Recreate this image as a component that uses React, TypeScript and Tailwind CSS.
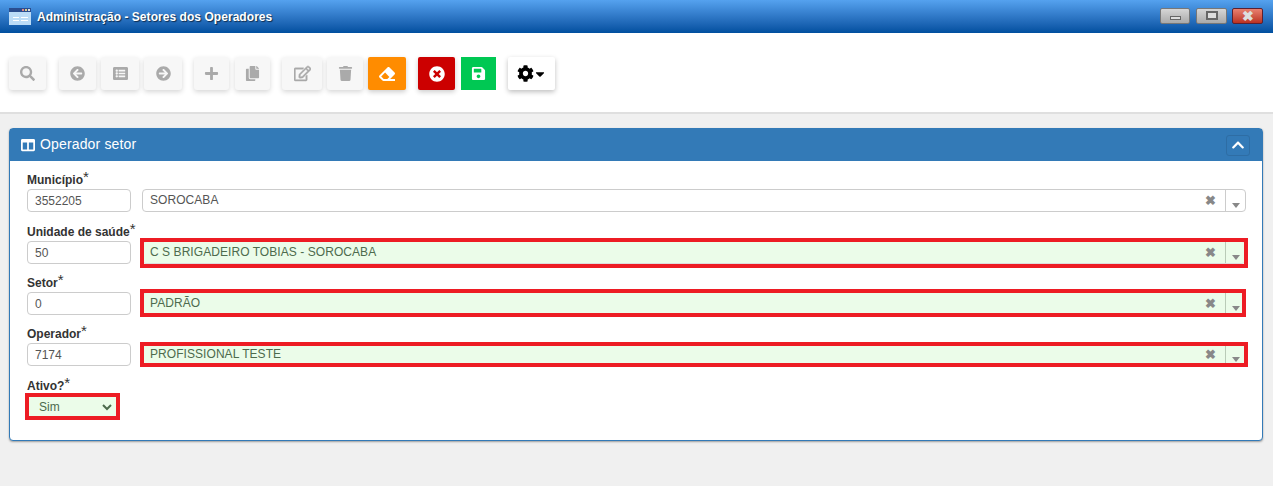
import React from 'react';
import {
  FaSearch, FaArrowCircleLeft, FaArrowCircleRight, FaListAlt, FaPlus, FaCopy, FaRegEdit,
  FaTrash, FaEraser, FaTimesCircle, FaSave, FaCog, FaCaretDown, FaColumns, FaChevronUp,
} from 'react-icons/fa';

const off = 'h-[33px] rounded-[3px] bg-[#f7f7f7] text-[#aaaaaa] shadow-[0_2px_5px_rgba(0,0,0,0.16)] flex items-center justify-center text-[15px]';

function ToolButton({ w, ml, children }: { w: string; ml: string; children: React.ReactNode }) {
  return <div className={`${off} ${w} ${ml}`}>{children}</div>;
}

function Label({ text }: { text: string }) {
  return (
    <div className="h-[19px] pt-[2px] flex items-start text-[12px] leading-[19px] font-bold text-[#333333]">
      {text}
      <span className="text-[15px] font-normal leading-[11px]">*</span>
    </div>
  );
}

function Combo({ code, value, mark, highlight }: { code: string; value: string; mark?: boolean; highlight?: string }) {
  return (
    <div className="flex h-[23px] mt-[1px]">
      <div className="w-[104px] h-[23px] border border-[#cccccc] rounded-[4px] bg-white px-[7px] text-[12px] leading-[23px] text-[#555555]">{code}</div>
      <div className={`relative ml-[11px] w-[1104px] h-[23px] flex border rounded-[4px] text-[12px] ${mark ? 'bg-[#ebfce9] border-[#dddddd] text-[#4d6b4d]' : 'bg-white border-[#cccccc] text-[#555555]'}`}>
        <div className="flex-1 pl-[7px] leading-[20px] tracking-[0.06px]">{value}</div>
        <div className="w-[20px] flex items-center justify-center text-[#888888] text-[13px] font-bold leading-none pr-[9px]">✖</div>
        <div className={`w-[20px] border-l flex items-end justify-center pb-[3px] ${mark ? 'border-[#b9cbb7]' : 'border-[#cccccc]'}`}>
          <div className="w-0 h-0 border-l-[4px] border-r-[4px] border-t-[5px] border-l-transparent border-r-transparent border-t-[#888888]" />
        </div>
        {highlight && <div className={`absolute border-4 border-[#ed1c24] ${highlight}`} />}
      </div>
    </div>
  );
}

export default function App() {
  return (
    <div className="w-[1273px] h-[486px] overflow-hidden bg-[#f0f0f0] font-['Liberation_Sans',Arial,sans-serif]">
      <div className="h-[33px] flex items-center bg-gradient-to-b from-[#55a2ef] to-[#004f9f]">
        <svg width="22" height="17" viewBox="0 0 22 17" className="ml-[9px]">
          <rect x="0" y="0" width="22" height="4" fill="#2a4d8f" />
          <rect x="13" y="1" width="2" height="2" fill="#d88" />
          <rect x="16" y="1" width="2" height="2" fill="#dc8" />
          <rect x="19" y="1" width="2" height="2" fill="#ddd" />
          <rect x="0" y="4" width="22" height="13" fill="#bcdcf7" />
          <rect x="4" y="9" width="6" height="1" fill="#fff" />
          <rect x="4" y="12" width="6" height="1" fill="#fff" />
          <rect x="12" y="9" width="7" height="1" fill="#fff" />
          <rect x="12" y="12" width="7" height="1" fill="#fff" />
        </svg>
        <span className="ml-[6px] text-white text-[12px] font-bold tracking-[0.05px] [text-shadow:1px_1px_1px_rgba(0,0,0,0.6)]">Administração - Setores dos Operadores</span>
        <div className="ml-auto flex items-center mr-[10px] -mt-[2px]">
          <div className="w-[30px] h-[16px] rounded-[2px] border border-[#777777] bg-gradient-to-b from-[#d6d6d6] to-[#aaaaaa] flex items-end justify-center pb-[3px]">
            <div className="w-[11px] h-[4px] border border-[#666666] bg-[#dddddd]" />
          </div>
          <div className="ml-[6px] w-[31px] h-[16px] rounded-[2px] border border-[#777777] bg-gradient-to-b from-[#d6d6d6] to-[#aaaaaa] flex items-center justify-center">
            <div className="w-[12px] h-[9px] border-2 border-[#666666] bg-[#dddddd]" />
          </div>
          <div className="ml-[5px] w-[31px] h-[16px] rounded-[2px] border border-[#5c2030] bg-gradient-to-b from-[#e88070] to-[#bb3020] flex items-center justify-center text-[#dddddd] text-[14px] font-bold leading-none">✖</div>
        </div>
      </div>

      <div className="h-[81px] bg-white border-b-2 border-[#dfdfdf] flex items-start pt-[24px] pl-[9px]">
        <ToolButton w="w-[37px]" ml=""><FaSearch /></ToolButton>
        <ToolButton w="w-[37px]" ml="ml-[13px]"><FaArrowCircleLeft /></ToolButton>
        <ToolButton w="w-[38px]" ml="ml-[5px]"><FaListAlt /></ToolButton>
        <ToolButton w="w-[38px]" ml="ml-[5px]"><FaArrowCircleRight /></ToolButton>
        <ToolButton w="w-[35px]" ml="ml-[12px]"><FaPlus /></ToolButton>
        <ToolButton w="w-[35px]" ml="ml-[6px]"><FaCopy /></ToolButton>
        <ToolButton w="w-[40px]" ml="ml-[12px]"><FaRegEdit className="text-[17px] stroke-[15px]" /></ToolButton>
        <ToolButton w="w-[36px]" ml="ml-[5px]"><FaTrash /></ToolButton>
        <div className="ml-[5px] w-[38px] h-[33px] rounded-[2px] bg-[#ff8c00] text-white flex items-center justify-center text-[16px] shadow-[0_2px_5px_rgba(0,0,0,0.2)]"><FaEraser /></div>
        <div className="ml-[12px] w-[37px] h-[33px] rounded-[2px] bg-[#cc0000] text-white flex items-center justify-center text-[16px] shadow-[0_2px_5px_rgba(0,0,0,0.2)]"><FaTimesCircle /></div>
        <div className="ml-[6px] w-[35px] h-[33px] bg-[#00c853] text-white flex items-center justify-center text-[15px]"><FaSave /></div>
        <div className="ml-[12px] w-[47px] h-[33px] rounded-[2px] bg-white text-black flex items-center justify-center text-[17px] shadow-[0_2px_5px_rgba(0,0,0,0.25)]"><FaCog /><FaCaretDown className="text-[14px] -ml-[1px]" /></div>
      </div>

      <div className="mt-[14px] mx-[9px] w-[1254px] h-[313px] rounded-[4px] bg-white border border-[#337ab7] shadow-[0_1px_2px_rgba(0,0,0,0.35)]">
        <div className="h-[32px] bg-[#337ab7] flex items-center pl-[11px] pr-[12px] text-white">
          <FaColumns className="text-[14px]" />
          <span className="ml-[5px] -mt-[1px] text-[14px] tracking-[0.15px]">Operador setor</span>
          <div className="ml-auto w-[24px] h-[21px] rounded-[3px] border border-[#2e6da4] flex items-center justify-center text-[14px]"><FaChevronUp /></div>
        </div>
        <div className="pl-[17px] pt-[8px]">
          <Label text="Município" />
          <Combo code="3552205" value="SOROCABA" />
          <div className="mt-[9px]"><Label text="Unidade de saúde" /></div>
          <Combo code="50" value="C S BRIGADEIRO TOBIAS - SOROCABA" mark highlight="-left-[3px] -right-[3px] -top-[4px] -bottom-[5px]" />
          <div className="mt-[8px]"><Label text="Setor" /></div>
          <Combo code="0" value="PADRÃO" mark highlight="-left-[3px] -right-[1px] -top-[4px] -bottom-[3px]" />
          <div className="mt-[8px]"><Label text="Operador" /></div>
          <Combo code="7174" value="PROFISSIONAL TESTE" mark highlight="-left-[3px] -right-[3px] -top-[2px] -bottom-[2px]" />
          <div className="mt-[9px]"><Label text="Ativo?" /></div>
          <div className="mt-[3px] w-[87px] h-[19px] ml-[2px] flex items-center justify-between pl-[10px] pr-[3px] text-[12px] bg-[#ebfce9] text-[#4d6b4d] outline-[4px] outline-[#ed1c24]">
            Sim
            <svg width="12" height="12" viewBox="0 0 12 12" fill="none" stroke="#4d6b4d" strokeWidth="2"><path d="M2 4l4 4 4-4" /></svg>
          </div>
        </div>
      </div>
    </div>
  );
}
